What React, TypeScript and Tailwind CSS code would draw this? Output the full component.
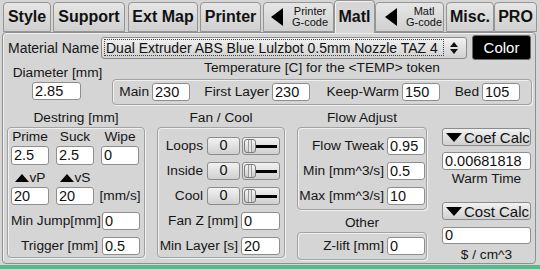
import React from "react";

const LBL = "text-[13.7px] leading-[16px] text-[#161616] whitespace-nowrap";
const GRP =
  "border border-[#a2a2a2] rounded-[4px] shadow-[1px_1px_0_#f0f0f0,inset_1px_1px_0_#f0f0f0]";
const BTN =
  "border border-[#8c8c8c] rounded-[3px] bg-linear-to-b from-[#f2f2f2] to-[#d0d0d0]";

function Inp({ v, w, h = "h-[18px]", cls = "" }: { v: string; w: string; h?: string; cls?: string }) {
  return (
    <div
      className={`${w} ${h} ${cls} shrink-0 bg-white border border-[#8e8e8e] rounded-[3px] pl-[2px] flex items-center text-[14.5px] text-[#111] leading-none`}
    >
      {v}
    </div>
  );
}

function Tab({
  cls,
  children,
  sel = false,
}: {
  cls: string;
  children: React.ReactNode;
  sel?: boolean;
}) {
  return (
    <div
      className={`${cls} shrink-0 flex items-center justify-center border border-[#959595] rounded-t-[4px] ${
        sel
          ? "h-[33px] border-b-0 bg-[#d6d6d6] relative z-10 -mb-[1px] shadow-[inset_1px_1px_0_#f2f2f2]"
          : "h-[30px] bg-linear-to-b from-[#e6e6e6] to-[#cfcfcf]"
      }`}
    >
      {children}
    </div>
  );
}

function BigLabel({ t }: { t: string }) {
  return <span className="text-[16px] font-bold text-[#111] leading-none">{t}</span>;
}

function TriLeft() {
  return (
    <svg width="12" height="18" viewBox="0 0 12 18" className="shrink-0">
      <path d="M12 0V18L0 9Z" fill="#000" />
    </svg>
  );
}

function TwoLine({ a, b }: { a: string; b: string }) {
  return (
    <div className="flex flex-col items-center text-[11px] leading-[11px] text-[#111]">
      <span>{a}</span>
      <span>{b}</span>
    </div>
  );
}

function Slider() {
  return (
    <div className={`ml-[2px] w-[38px] h-[18px] ${BTN} flex items-center pl-[1px] pr-[2px] shrink-0`}>
      <div className="w-[12px] h-[14px] rounded-[3px] border border-[#7a7a7a] bg-linear-to-b from-[#f6f6f6] to-[#cccccc] flex justify-center shrink-0">
        <div className="w-[4px] h-full border-x border-[#9a9a9a] bg-[#e6e6e6]" />
      </div>
      <div className="flex-1 h-[3px] bg-black" />
    </div>
  );
}

function FanRow({ label, mt }: { label: string; mt: string }) {
  return (
    <div className={`${mt} flex items-center h-[18px]`}>
      <div className={`w-[49px] text-right pr-[4px] ${LBL}`}>{label}</div>
      <div className={`w-[33px] h-[18px] ${BTN} flex items-center justify-center text-[14.5px] text-[#111] shrink-0`}>
        0
      </div>
      <Slider />
    </div>
  );
}

function LabRow({
  label,
  v,
  mt,
  lw,
  iw,
}: {
  label: string;
  v: string;
  mt: string;
  lw: string;
  iw: string;
}) {
  return (
    <div className={`${mt} flex items-center h-[18px]`}>
      <div className={`${lw} text-right pr-[3px] ${LBL} shrink-0`}>{label}</div>
      <Inp v={v} w={iw} />
    </div>
  );
}

function CalcBtn({ label, mt }: { label: string; mt: string }) {
  return (
    <div className={`${mt} h-[18px] w-full ${BTN} flex items-center pl-[3px] text-[15px] text-[#111] leading-none`}>
      <svg width="16" height="9" viewBox="0 0 16 9" className="shrink-0">
        <path d="M0 0H16L8 9Z" fill="#000" />
      </svg>
      <span className="ml-[2px]">{label}</span>
    </div>
  );
}

function UpTri() {
  return (
    <svg width="14" height="8" viewBox="0 0 14 8" className="shrink-0">
      <path d="M0 8L7 0L14 8Z" fill="#000" />
    </svg>
  );
}

export default function App() {
  return (
    <div className="w-[540px] h-[269px] bg-[#d5d5d5] flex flex-col overflow-hidden [font-family:'Liberation_Sans',Arial,sans-serif]">
      {/* Tabs */}
      <div className="h-[32px] flex items-end shrink-0">
        <Tab cls="ml-[3px] w-[48px]">
          <BigLabel t="Style" />
        </Tab>
        <Tab cls="ml-[2px] w-[72px]">
          <BigLabel t="Support" />
        </Tab>
        <Tab cls="ml-[3px] w-[70px]">
          <BigLabel t="Ext Map" />
        </Tab>
        <Tab cls="ml-[2px] w-[61px]">
          <BigLabel t="Printer" />
        </Tab>
        <Tab cls="ml-[2px] w-[71px] !justify-start pl-[7px] gap-[9px]">
          <TriLeft />
          <TwoLine a="Printer" b="G-code" />
        </Tab>
        <Tab cls="w-[41px]" sel>
          <BigLabel t="Matl" />
        </Tab>
        <Tab cls="w-[69px] !justify-start pl-[9px] gap-[9px]">
          <TriLeft />
          <TwoLine a="Matl" b="G-code" />
        </Tab>
        <Tab cls="ml-[2px] w-[48px]">
          <BigLabel t="Misc." />
        </Tab>
        <Tab cls="w-[43px]">
          <BigLabel t="PRO" />
        </Tab>
      </div>

      {/* Panel */}
      <div className="ml-[2px] w-[534px] h-[232px] shrink-0 border border-[#8f8f8f] rounded-[4px] shadow-[inset_1px_1px_0_#f0f0f0] flex flex-col">
        {/* Row 1 */}
        <div className="mt-[2px] h-[25px] flex items-center shrink-0">
          <div className={`ml-[5px] w-[93px] ${LBL} text-[14px]`}>Material Name</div>
          <div className={`w-[366px] h-[22px] ${BTN} flex items-center pl-[2px] pr-[2px]`}>
            <div className="w-[340px] h-[17px] border border-dotted border-[#444] flex items-center pl-[1px] text-[14px] text-[#111] whitespace-nowrap overflow-hidden leading-none">
              Dual Extruder ABS Blue Lulzbot 0.5mm Nozzle TAZ 4
            </div>
            <div className="ml-[6px] flex flex-col items-center gap-[2px]">
              <svg width="8" height="5" viewBox="0 0 8 5">
                <path d="M0 5L4 0L8 5Z" fill="#111" />
              </svg>
              <svg width="8" height="5" viewBox="0 0 8 5">
                <path d="M0 0H8L4 5Z" fill="#111" />
              </svg>
            </div>
          </div>
          <div className="ml-[5px] w-[59px] h-[25px] bg-black rounded-[3px] border border-[#6a6a6a] flex items-center justify-center text-white text-[15px] leading-none">
            Color
          </div>
        </div>

        {/* Row 2 */}
        <div className="h-[45px] flex shrink-0">
          <div className="w-[109px] flex flex-col items-center">
            <div className={`mt-[5px] ${LBL}`}>Diameter [mm]</div>
            <Inp v="2.85" w="w-[49px]" cls="mt-[1px] ml-[-2px]" />
          </div>
          <div className="w-[420px] flex flex-col">
            <div className={`${LBL} text-center`}>Temperature [C] for the &lt;TEMP&gt; token</div>
            <div className={`mt-[3px] h-[26px] ${GRP} flex items-center`}>
              <div className={`w-[39px] text-right pr-[3px] ${LBL}`}>Main</div>
              <Inp v="230" w="w-[38px]" />
              <div className={`w-[82px] text-right pr-[3px] ${LBL}`}>First Layer</div>
              <Inp v="230" w="w-[38px]" />
              <div className={`w-[92px] text-right pr-[3px] ${LBL}`}>Keep-Warm</div>
              <Inp v="150" w="w-[38px]" />
              <div className={`w-[42px] text-right pr-[3px] ${LBL}`}>Bed</div>
              <Inp v="105" w="w-[38px]" />
            </div>
          </div>
        </div>

        {/* Row 3 */}
        <div className="flex flex-1">
          {/* Destring */}
          <div className="ml-[4px] w-[138px] flex flex-col">
            <div className={`mt-[5px] ${LBL} text-center`}>Destring [mm]</div>
            <div className={`mt-[1px] h-[131px] ${GRP} flex flex-col px-[3px]`}>
              <div className="mt-[1px] grid grid-cols-[38px_38px_38px] gap-x-[7px]">
                <div className={`${LBL} text-center`}>Prime</div>
                <div className={`${LBL} text-center`}>Suck</div>
                <div className={`${LBL} text-center`}>Wipe</div>
                <Inp v="2.5" w="w-[38px]" h="h-[19px]" cls="mt-[1px]" />
                <Inp v="2.5" w="w-[38px]" h="h-[19px]" cls="mt-[1px]" />
                <Inp v="0" w="w-[38px]" h="h-[19px]" cls="mt-[1px]" />
              </div>
              <div className="mt-[5px] grid grid-cols-[38px_38px_38px] gap-x-[7px]">
                <div className={`${LBL} flex items-center justify-center gap-[1px]`}>
                  <UpTri />
                  <span>vP</span>
                </div>
                <div className={`${LBL} flex items-center justify-center gap-[1px]`}>
                  <UpTri />
                  <span>vS</span>
                </div>
                <div />
                <Inp v="20" w="w-[38px]" cls="mt-[1px]" />
                <Inp v="20" w="w-[38px]" cls="mt-[1px]" />
                <div className={`mt-[1px] ${LBL} h-[18px] flex items-center justify-center`}>[mm/s]</div>
              </div>
              <div className="mt-[7px] flex items-center">
                <div className={`w-[91px] text-right pr-[4px] ${LBL}`}>Min Jump[mm]</div>
                <Inp v="0" w="w-[38px]" />
              </div>
              <div className="mt-[7px] flex items-center">
                <div className={`w-[91px] text-right pr-[4px] ${LBL}`}>Trigger [mm]</div>
                <Inp v="0.5" w="w-[38px]" />
              </div>
            </div>
          </div>

          {/* Fan / Cool */}
          <div className="ml-[12px] w-[128px] flex flex-col">
            <div className={`mt-[5px] ${LBL} text-center`}>Fan / Cool</div>
            <div className={`mt-[1px] h-[131px] ${GRP} flex flex-col`}>
              <FanRow label="Loops" mt="mt-[9px]" />
              <FanRow label="Inside" mt="mt-[7px]" />
              <FanRow label="Cool" mt="mt-[7px]" />
              <LabRow label="Fan Z [mm]" v="0" mt="mt-[7px]" lw="w-[83px]" iw="w-[39px]" />
              <LabRow label="Min Layer [s]" v="20" mt="mt-[7px]" lw="w-[83px]" iw="w-[39px]" />
            </div>
          </div>

          {/* Flow Adjust */}
          <div className="ml-[12px] w-[130px] flex flex-col">
            <div className={`mt-[5px] ${LBL} text-center`}>Flow Adjust</div>
            <div className={`mt-[1px] h-[83px] ${GRP} flex flex-col`}>
              <LabRow label="Flow Tweak" v="0.95" mt="mt-[9px]" lw="w-[89px]" iw="w-[38px]" />
              <LabRow label="Min [mm^3/s]" v="0.5" mt="mt-[7px]" lw="w-[89px]" iw="w-[38px]" />
              <LabRow label="Max [mm^3/s]" v="10" mt="mt-[7px]" lw="w-[89px]" iw="w-[38px]" />
            </div>
            <div className={`mt-[5px] ${LBL} text-center`}>Other</div>
            <div className={`mt-[1px] h-[28px] ${GRP} flex items-center`}>
              <div className={`w-[89px] text-right pr-[3px] ${LBL}`}>Z-lift [mm]</div>
              <Inp v="0" w="w-[38px]" />
            </div>
          </div>

          {/* Right column */}
          <div className="ml-[15px] w-[89px] flex flex-col items-center">
            <CalcBtn label="Coef Calc" mt="mt-[23px]" />
            <Inp v="0.00681818" w="w-[89px]" cls="mt-[6px]" />
            <div className={`mt-[1px] ${LBL}`}>Warm Time</div>
            <CalcBtn label="Cost Calc" mt="mt-[15px]" />
            <Inp v="0" w="w-[89px]" h="h-[17px]" cls="mt-[7px]" />
            <div className={`mt-[3px] ${LBL}`}>$ / cm^3</div>
          </div>
        </div>
      </div>

      <div className="mt-auto h-[4px] bg-[#5ab98c] shrink-0" />
    </div>
  );
}
